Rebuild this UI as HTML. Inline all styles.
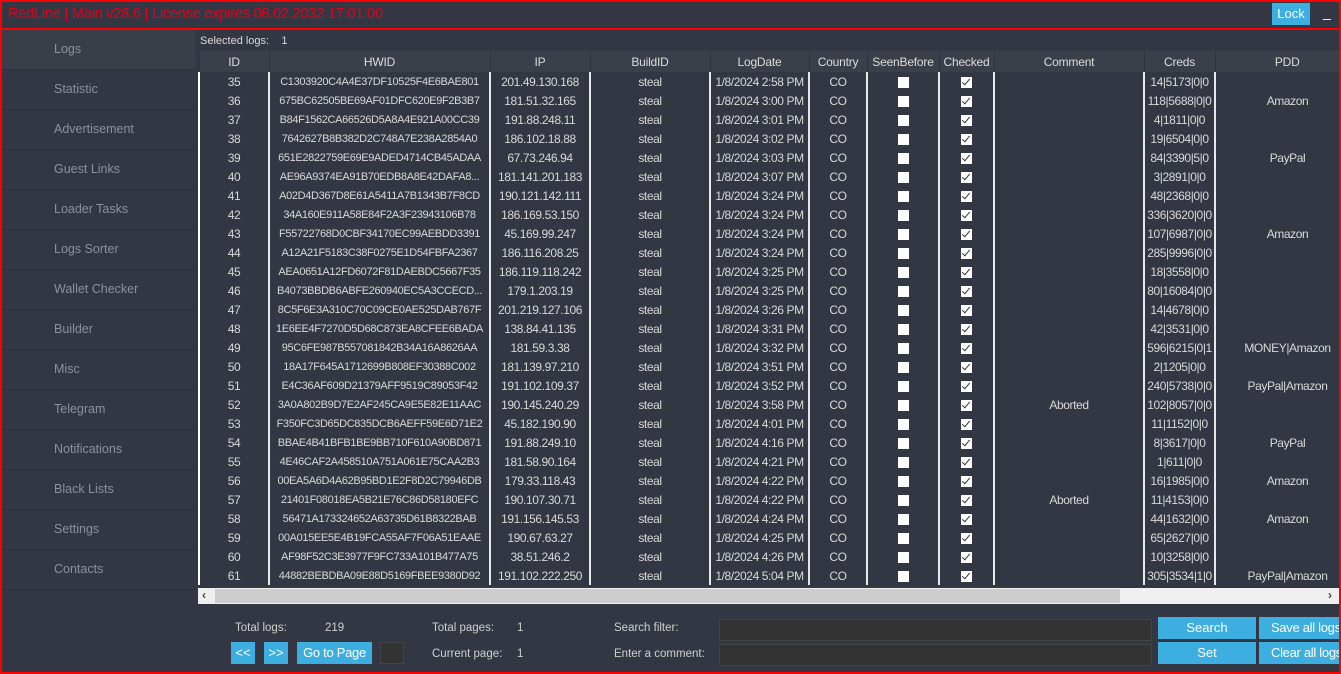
<!DOCTYPE html><html><head><meta charset="utf-8"><style>
*{box-sizing:border-box;margin:0;padding:0}
body{width:1341px;height:674px;overflow:hidden;background:#333743;font-family:"Liberation Sans",sans-serif;font-size:12px;color:#d9d9d9;position:relative}
#frame{position:absolute;left:0;top:0;width:1341px;height:674px;border:2px solid #f00;pointer-events:none;z-index:9}
#title{position:absolute;left:0;top:0;width:1341px;height:30px;border-bottom:2px solid #f00}
#title span{position:absolute;left:8px;top:6px;color:#e3001b;font-size:14.5px;letter-spacing:-0.2px}
#lock{position:absolute;left:1272px;top:3px;width:38px;height:22px;background:#3daee0;color:#fff;font-size:13px;text-align:center;line-height:22px}
#min{position:absolute;left:1323px;top:4px;color:#fff;font-size:14px}
#side{position:absolute;left:2px;top:30px;width:193px}
#side div{height:40px;border-bottom:1px solid #2a2d35;color:#8c919b;font-size:12.5px;padding-left:52px;line-height:38px}
#side div:first-child{background:#3a3e49}
#sel{position:absolute;left:200px;top:35px;font-size:11px}
table{position:absolute;left:198px;top:51px;border-collapse:collapse;table-layout:fixed;width:1160px}
th{height:21px;background:#3b3f4a;font-weight:normal;font-size:12px;border-left:1px solid #30333c;color:#dcdcdc;letter-spacing:-0.2px}
td{height:19px;text-align:center;font-size:12px;letter-spacing:-0.4px;border-left:2px solid #e8e8e8;white-space:nowrap;overflow:hidden;padding:0 1px}
td:nth-child(2){font-size:11px;letter-spacing:-0.35px}
tbody tr td:first-child{border-left:2px solid #fff}
.cb{display:inline-block;width:11px;height:11px;background:#fff;vertical-align:middle;position:relative}
.ck::after{content:"";position:absolute;left:3px;top:0px;width:3px;height:7px;border:solid #333;border-width:0 1.5px 1.5px 0;transform:rotate(40deg)}
#sb{position:absolute;left:198px;top:588px;width:1143px;height:16px;background:#efefef}
#sb .th{position:absolute;left:17px;top:1px;width:905px;height:14px;background:#cdcdcd}
#sb .l{position:absolute;left:4px;top:0;font-size:12px;color:#444;font-weight:bold}
#sb .r{position:absolute;left:1130px;top:0;font-size:12px;color:#444;font-weight:bold}
.lb{position:absolute;font-size:11.5px;color:#d0d0d0}
.bt{position:absolute;background:#3daee0;color:#fff;text-align:center;font-size:13px;line-height:22px;height:22px;white-space:nowrap;overflow:hidden}
.in{position:absolute;background:#333;border:1px solid #444;height:22px}
</style></head><body>
<div id="frame"></div>
<div id="title"><span>RedLine | Main v28.6 | License expires 08.02.2032 17:01:00</span><div id="lock">Lock</div><div id="min">_</div></div>
<div id="side"><div>Logs</div><div>Statistic</div><div>Advertisement</div><div>Guest Links</div><div>Loader Tasks</div><div>Logs Sorter</div><div>Wallet Checker</div><div>Builder</div><div>Misc</div><div>Telegram</div><div>Notifications</div><div>Black Lists</div><div>Settings</div><div>Contacts</div></div>
<div id="sel">Selected logs: &nbsp;&nbsp; 1</div>
<table>
<colgroup><col style="width:70px"><col style="width:221px"><col style="width:100px"><col style="width:120px"><col style="width:99px"><col style="width:58px"><col style="width:72px"><col style="width:55px"><col style="width:150px"><col style="width:71px"><col style="width:144px"></colgroup>
<thead><tr><th>ID</th><th>HWID</th><th>IP</th><th>BuildID</th><th>LogDate</th><th>Country</th><th>SeenBefore</th><th>Checked</th><th>Comment</th><th>Creds</th><th>PDD</th></tr></thead>
<tbody>
<tr><td>35</td><td>C1303920C4A4E37DF10525F4E6BAE801</td><td>201.49.130.168</td><td>steal</td><td>1/8/2024 2:58 PM</td><td>CO</td><td><i class="cb"></i></td><td><i class="cb ck"></i></td><td></td><td>14|5173|0|0</td><td></td></tr>
<tr><td>36</td><td>675BC62505BE69AF01DFC620E9F2B3B7</td><td>181.51.32.165</td><td>steal</td><td>1/8/2024 3:00 PM</td><td>CO</td><td><i class="cb"></i></td><td><i class="cb ck"></i></td><td></td><td>118|5688|0|0</td><td>Amazon</td></tr>
<tr><td>37</td><td>B84F1562CA66526D5A8A4E921A00CC39</td><td>191.88.248.11</td><td>steal</td><td>1/8/2024 3:01 PM</td><td>CO</td><td><i class="cb"></i></td><td><i class="cb ck"></i></td><td></td><td>4|1811|0|0</td><td></td></tr>
<tr><td>38</td><td>7642627B8B382D2C748A7E238A2854A0</td><td>186.102.18.88</td><td>steal</td><td>1/8/2024 3:02 PM</td><td>CO</td><td><i class="cb"></i></td><td><i class="cb ck"></i></td><td></td><td>19|6504|0|0</td><td></td></tr>
<tr><td>39</td><td>651E2822759E69E9ADED4714CB45ADAA</td><td>67.73.246.94</td><td>steal</td><td>1/8/2024 3:03 PM</td><td>CO</td><td><i class="cb"></i></td><td><i class="cb ck"></i></td><td></td><td>84|3390|5|0</td><td>PayPal</td></tr>
<tr><td>40</td><td>AE96A9374EA91B70EDB8A8E42DAFA8...</td><td>181.141.201.183</td><td>steal</td><td>1/8/2024 3:07 PM</td><td>CO</td><td><i class="cb"></i></td><td><i class="cb ck"></i></td><td></td><td>3|2891|0|0</td><td></td></tr>
<tr><td>41</td><td>A02D4D367D8E61A5411A7B1343B7F8CD</td><td>190.121.142.111</td><td>steal</td><td>1/8/2024 3:24 PM</td><td>CO</td><td><i class="cb"></i></td><td><i class="cb ck"></i></td><td></td><td>48|2368|0|0</td><td></td></tr>
<tr><td>42</td><td>34A160E911A58E84F2A3F23943106B78</td><td>186.169.53.150</td><td>steal</td><td>1/8/2024 3:24 PM</td><td>CO</td><td><i class="cb"></i></td><td><i class="cb ck"></i></td><td></td><td>336|3620|0|0</td><td></td></tr>
<tr><td>43</td><td>F55722768D0CBF34170EC99AEBDD3391</td><td>45.169.99.247</td><td>steal</td><td>1/8/2024 3:24 PM</td><td>CO</td><td><i class="cb"></i></td><td><i class="cb ck"></i></td><td></td><td>107|6987|0|0</td><td>Amazon</td></tr>
<tr><td>44</td><td>A12A21F5183C38F0275E1D54FBFA2367</td><td>186.116.208.25</td><td>steal</td><td>1/8/2024 3:24 PM</td><td>CO</td><td><i class="cb"></i></td><td><i class="cb ck"></i></td><td></td><td>285|9996|0|0</td><td></td></tr>
<tr><td>45</td><td>AEA0651A12FD6072F81DAEBDC5667F35</td><td>186.119.118.242</td><td>steal</td><td>1/8/2024 3:25 PM</td><td>CO</td><td><i class="cb"></i></td><td><i class="cb ck"></i></td><td></td><td>18|3558|0|0</td><td></td></tr>
<tr><td>46</td><td>B4073BBDB6ABFE260940EC5A3CCECD...</td><td>179.1.203.19</td><td>steal</td><td>1/8/2024 3:25 PM</td><td>CO</td><td><i class="cb"></i></td><td><i class="cb ck"></i></td><td></td><td>80|16084|0|0</td><td></td></tr>
<tr><td>47</td><td>8C5F6E3A310C70C09CE0AE525DAB767F</td><td>201.219.127.106</td><td>steal</td><td>1/8/2024 3:26 PM</td><td>CO</td><td><i class="cb"></i></td><td><i class="cb ck"></i></td><td></td><td>14|4678|0|0</td><td></td></tr>
<tr><td>48</td><td>1E6EE4F7270D5D68C873EA8CFEE6BADA</td><td>138.84.41.135</td><td>steal</td><td>1/8/2024 3:31 PM</td><td>CO</td><td><i class="cb"></i></td><td><i class="cb ck"></i></td><td></td><td>42|3531|0|0</td><td></td></tr>
<tr><td>49</td><td>95C6FE987B557081842B34A16A8626AA</td><td>181.59.3.38</td><td>steal</td><td>1/8/2024 3:32 PM</td><td>CO</td><td><i class="cb"></i></td><td><i class="cb ck"></i></td><td></td><td>596|6215|0|1</td><td>MONEY|Amazon</td></tr>
<tr><td>50</td><td>18A17F645A1712699B808EF30388C002</td><td>181.139.97.210</td><td>steal</td><td>1/8/2024 3:51 PM</td><td>CO</td><td><i class="cb"></i></td><td><i class="cb ck"></i></td><td></td><td>2|1205|0|0</td><td></td></tr>
<tr><td>51</td><td>E4C36AF609D21379AFF9519C89053F42</td><td>191.102.109.37</td><td>steal</td><td>1/8/2024 3:52 PM</td><td>CO</td><td><i class="cb"></i></td><td><i class="cb ck"></i></td><td></td><td>240|5738|0|0</td><td>PayPal|Amazon</td></tr>
<tr><td>52</td><td>3A0A802B9D7E2AF245CA9E5E82E11AAC</td><td>190.145.240.29</td><td>steal</td><td>1/8/2024 3:58 PM</td><td>CO</td><td><i class="cb"></i></td><td><i class="cb ck"></i></td><td>Aborted</td><td>102|8057|0|0</td><td></td></tr>
<tr><td>53</td><td>F350FC3D65DC835DCB6AEFF59E6D71E2</td><td>45.182.190.90</td><td>steal</td><td>1/8/2024 4:01 PM</td><td>CO</td><td><i class="cb"></i></td><td><i class="cb ck"></i></td><td></td><td>11|1152|0|0</td><td></td></tr>
<tr><td>54</td><td>BBAE4B41BFB1BE9BB710F610A90BD871</td><td>191.88.249.10</td><td>steal</td><td>1/8/2024 4:16 PM</td><td>CO</td><td><i class="cb"></i></td><td><i class="cb ck"></i></td><td></td><td>8|3617|0|0</td><td>PayPal</td></tr>
<tr><td>55</td><td>4E46CAF2A458510A751A061E75CAA2B3</td><td>181.58.90.164</td><td>steal</td><td>1/8/2024 4:21 PM</td><td>CO</td><td><i class="cb"></i></td><td><i class="cb ck"></i></td><td></td><td>1|611|0|0</td><td></td></tr>
<tr><td>56</td><td>00EA5A6D4A62B95BD1E2F8D2C79946DB</td><td>179.33.118.43</td><td>steal</td><td>1/8/2024 4:22 PM</td><td>CO</td><td><i class="cb"></i></td><td><i class="cb ck"></i></td><td></td><td>16|1985|0|0</td><td>Amazon</td></tr>
<tr><td>57</td><td>21401F08018EA5B21E76C86D58180EFC</td><td>190.107.30.71</td><td>steal</td><td>1/8/2024 4:22 PM</td><td>CO</td><td><i class="cb"></i></td><td><i class="cb ck"></i></td><td>Aborted</td><td>11|4153|0|0</td><td></td></tr>
<tr><td>58</td><td>56471A173324652A63735D61B8322BAB</td><td>191.156.145.53</td><td>steal</td><td>1/8/2024 4:24 PM</td><td>CO</td><td><i class="cb"></i></td><td><i class="cb ck"></i></td><td></td><td>44|1632|0|0</td><td>Amazon</td></tr>
<tr><td>59</td><td>00A015EE5E4B19FCA55AF7F06A51EAAE</td><td>190.67.63.27</td><td>steal</td><td>1/8/2024 4:25 PM</td><td>CO</td><td><i class="cb"></i></td><td><i class="cb ck"></i></td><td></td><td>65|2627|0|0</td><td></td></tr>
<tr><td>60</td><td>AF98F52C3E3977F9FC733A101B477A75</td><td>38.51.246.2</td><td>steal</td><td>1/8/2024 4:26 PM</td><td>CO</td><td><i class="cb"></i></td><td><i class="cb ck"></i></td><td></td><td>10|3258|0|0</td><td></td></tr>
<tr><td>61</td><td>44882BEBDBA09E88D5169FBEE9380D92</td><td>191.102.222.250</td><td>steal</td><td>1/8/2024 5:04 PM</td><td>CO</td><td><i class="cb"></i></td><td><i class="cb ck"></i></td><td></td><td>305|3534|1|0</td><td>PayPal|Amazon</td></tr>
</tbody></table>
<div id="sb"><span class="l">&lsaquo;</span><div class="th"></div><span class="r">&rsaquo;</span></div>
<div class="lb" style="left:235px;top:622px">Total logs:</div><div class="lb" style="left:325px;top:622px">219</div>
<div class="lb" style="left:432px;top:622px">Total pages:</div><div class="lb" style="left:517px;top:622px">1</div>
<div class="lb" style="left:432px;top:648px">Current page:</div><div class="lb" style="left:517px;top:648px">1</div>
<div class="lb" style="left:614px;top:622px">Search filter:</div><div class="lb" style="left:614px;top:648px">Enter a comment:</div>
<div class="bt" style="left:231px;top:642px;width:24px">&lt;&lt;</div>
<div class="bt" style="left:264px;top:642px;width:24px">&gt;&gt;</div>
<div class="bt" style="left:297px;top:642px;width:75px;letter-spacing:-0.3px">Go to Page</div>
<div class="in" style="left:380px;top:642px;width:24px"></div>
<div class="in" style="left:719px;top:619px;width:433px"></div>
<div class="in" style="left:719px;top:644px;width:433px"></div>
<div class="bt" style="left:1158px;top:617px;width:98px">Search</div>
<div class="bt" style="left:1158px;top:642px;width:98px">Set</div>
<div class="bt" style="left:1259px;top:617px;width:90px;text-align:left;padding-left:12px;letter-spacing:-0.3px">Save all logs</div>
<div class="bt" style="left:1259px;top:642px;width:90px;text-align:left;padding-left:12px;letter-spacing:-0.3px">Clear all logs</div>
</body></html>
